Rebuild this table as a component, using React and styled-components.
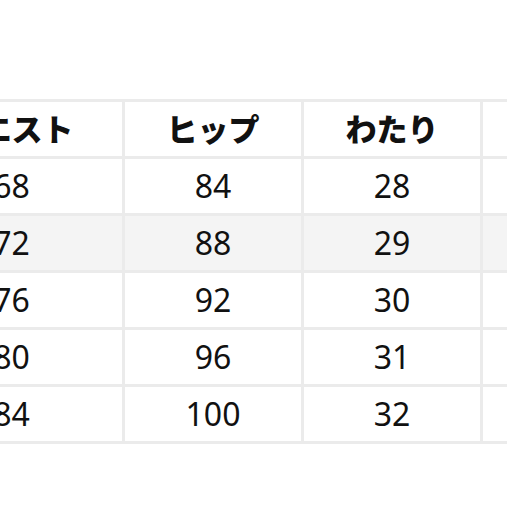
import React from 'react';
import styled, { createGlobalStyle } from 'styled-components';

const GlobalStyle = createGlobalStyle`
  html, body {
    margin: 0;
    padding: 0;
    background: #ffffff;
  }
  body {
    font-family: "Noto Sans", "Noto Sans CJK JP", sans-serif;
    color: #111111;
  }
`;

const headers = ['ウエスト', 'ヒップ', 'わたり', ''];

const rows = [
  ['68', '84', '28', ''],
  ['72', '88', '29', ''],
  ['76', '92', '30', ''],
  ['80', '96', '31', ''],
  ['84', '100', '32', ''],
];

function App() {
  return (
    <>
      <GlobalStyle />
      <Page>
        <SizeTable>
          {headers.map((h, i) => (
            <HeadCell key={'h' + i}>{h}</HeadCell>
          ))}
          {rows.map((row, r) =>
            row.map((v, c) => (
              <Cell key={r + '-' + c} $shaded={r === 1}>
                {v}
              </Cell>
            ))
          )}
        </SizeTable>
      </Page>
    </>
  );
}

export default App;

const Page = styled.div`
  width: 507px;
  height: 507px;
  overflow: hidden;
  padding-top: 99px;
  box-sizing: border-box;
`;

const SizeTable = styled.div`
  display: grid;
  grid-template-columns: 221px 176px 176px 200px;
  grid-auto-rows: 54px;
  gap: 3px;
  padding: 3px;
  background: #ebebeb;
  margin-left: -102px;
  width: max-content;
`;

const HeadCell = styled.div`
  background: #ffffff;
  display: flex;
  align-items: center;
  justify-content: center;
  padding-bottom: 4px;
  box-sizing: border-box;
  font-family: "Noto Sans CJK JP", sans-serif;
  font-size: 31px;
  font-weight: 900;
`;

const Cell = styled.div`
  background: ${(p) => (p.$shaded ? '#f4f4f4' : '#ffffff')};
  display: flex;
  align-items: center;
  justify-content: center;
  padding-bottom: 2px;
  box-sizing: border-box;
  font-size: 32px;
  font-weight: 400;
`;
